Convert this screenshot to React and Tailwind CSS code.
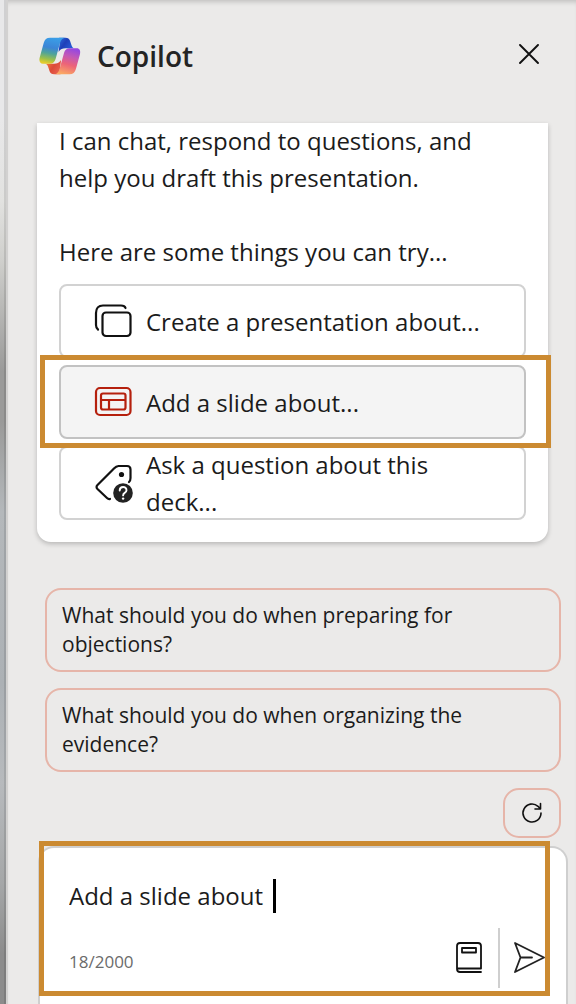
import { useState } from "react";

const MAX_CHARS = 2000;

const SUGGESTIONS = [
  "What should you do when preparing for objections?",
  "What should you do when organizing the evidence?",
];

const CopilotLogo = () => (
  <svg viewBox="0 0 42 38" className="w-[42px] h-[38px]" aria-hidden="true">
    <defs>
      <linearGradient id="leftRibbon" x1="0.6" y1="0" x2="0.4" y2="1">
        <stop offset="0" stopColor="#3a9fe8" />
        <stop offset="0.4" stopColor="#3c85d6" />
        <stop offset="0.62" stopColor="#4fa39a" />
        <stop offset="0.85" stopColor="#9cc04a" />
        <stop offset="1" stopColor="#e3cb2c" />
      </linearGradient>
      <linearGradient id="topFold" x1="0" y1="0" x2="1" y2="0.6">
        <stop offset="0" stopColor="#2a6fe0" />
        <stop offset="0.45" stopColor="#1f3fb8" />
        <stop offset="1" stopColor="#2a62de" />
      </linearGradient>
      <linearGradient id="rightRibbon" x1="0.65" y1="0" x2="0.35" y2="1">
        <stop offset="0" stopColor="#9648e0" />
        <stop offset="0.3" stopColor="#c459b4" />
        <stop offset="0.6" stopColor="#ec6378" />
        <stop offset="1" stopColor="#fbab62" />
      </linearGradient>
      <linearGradient id="bottomFold" x1="0" y1="0" x2="1" y2="0.6">
        <stop offset="0" stopColor="#f78c3c" />
        <stop offset="0.6" stopColor="#dc4a38" />
        <stop offset="1" stopColor="#e8604e" />
      </linearGradient>
    </defs>
    <path d="M20 .7h6.500c2.500 0 3.800 1 4.500 3l1.500 4.500c.6 2 1.600 3.100 3.500 3.100H26.500c-3 0-5 .7-7 3.700L21 4z" fill="url(#topFold)" />
    <path d="M21.600 37.300h-6.500c-2.500 0-3.800-1-4.500-3l-1.500-4.500c-.6-2-1.600-3.100-3.500-3.100h9.500c3 0 5-.7 7-3.700L20.600 34z" fill="url(#bottomFold)" />
    <path d="M11 .7h16c-3.500 0-5 2.300-6 5.300L16.600 22c-1 3.200-2.700 4.700-5.500 4.700H4C.8 26.700-.2 24 .7 20.500L4.700 6C5.700 2.500 7.500.7 11 .7z" fill="url(#leftRibbon)" />
    <path d="M30.600 37.300h-16c3.500 0 5-2.300 6-5.300L25 16c1-3.200 2.700-4.700 5.500-4.700h7.100c3.200 0 4.200 2.700 3.300 6.200L36.900 32c-1 3.500-2.800 5.300-6.300 5.300z" fill="url(#rightRibbon)" />
  </svg>
);

const SlidesIcon = () => (
  <svg viewBox="0 0 40 40" className="size-10" fill="none" stroke="#111" strokeWidth="2.200" strokeLinecap="round" aria-hidden="true">
    <path d="M4 28.500C2.600 27.500 2 26 2 24V12c0-4.500 2.500-7.500 7-7.500h18c2.500 0 4 .8 4.500 2.500" />
    <rect x="8.500" y="11.500" width="28" height="23.500" rx="3.500" />
  </svg>
);

const LayoutIcon = () => (
  <svg viewBox="0 0 40 40" className="size-10" fill="none" stroke="#b5200d" strokeWidth="2.200" aria-hidden="true">
    <rect x="2" y="6" width="34.500" height="27" rx="4" />
    <rect x="7" y="11.500" width="24.500" height="16" rx="2" />
    <path d="M7 18h24.500M15 18v9.500" />
  </svg>
);

const TagQuestionIcon = () => (
  <svg viewBox="0 0 40 40" className="size-10" fill="none" aria-hidden="true">
    <path d="M16 36c-1 .4-2 0-3-1L3.500 26c-1.300-1.300-1.300-2.700 0-4L19 6.500C20.500 5 22 3 24.500 3H33c2.500 0 3.500 1 3.500 3.500V15c0 2-.3 3-1.500 4" stroke="#111" strokeWidth="2.200" strokeLinecap="round" />
    <circle cx="27.500" cy="11.500" r="2.600" fill="#111" />
    <circle cx="29" cy="30" r="9.800" fill="#222" />
    <path d="M25.700 27.500c0-4.600 6.800-4.500 6.800-.3 0 2.600-3.400 2.700-3.400 5.200" stroke="#fff" strokeWidth="1.900" strokeLinecap="round" />
    <circle cx="29.100" cy="35.600" r="1.200" fill="#fff" />
  </svg>
);

const CloseIcon = () => (
  <svg viewBox="0 0 20 20" className="size-5" stroke="#111" strokeWidth="1.900" strokeLinecap="round" aria-hidden="true">
    <path d="M1 1l18 18M19 1L1 19" />
  </svg>
);

const RefreshIcon = () => (
  <svg viewBox="0 0 22 22" className="size-[22px]" fill="none" stroke="#111" strokeWidth="1.600" strokeLinecap="round" strokeLinejoin="round" aria-hidden="true">
    <path d="M20 11a9 9 0 1 1-3-6.700L19.500 7M19.500 1.500V7H14" />
  </svg>
);

const BookIcon = () => (
  <svg viewBox="0 0 26 32" className="w-[26px] h-8" fill="none" stroke="#111" strokeWidth="1.800" strokeLinecap="round" strokeLinejoin="round" aria-hidden="true">
    <path d="M25 30H4c-2 0-3-1-3-3V4c0-2 1-3 3-3h18c2 0 3 1 3 3v22.500H1.500" />
    <rect x="6" y="6" width="14" height="4.500" />
  </svg>
);

const SendIcon = () => (
  <svg viewBox="0 0 32 32" className="size-8" fill="none" stroke="#222" strokeWidth="1.800" strokeLinecap="round" strokeLinejoin="round" aria-hidden="true">
    <path d="M2 1l29 14.500L2 30l5.500-14.500zM7.500 15.500H19" />
  </svg>
);

const Highlight = ({ className }) => (
  <div className={`absolute border-[5px] border-[#cb8a31] pointer-events-none ${className}`} />
);

const PromptButton = ({ icon, label, active }) => (
  <button
    className={`
      flex items-center gap-3 w-full h-[74px] pl-[33px] pr-6
      border-2 rounded-lg text-left text-2xl leading-[37px]
      ${active ? "bg-[#f4f4f4] border-[#c2c2c2]" : "bg-white border-[#d2d2d2]"}
    `}
  >
    <span className="shrink-0">{icon}</span>
    <span>{label}</span>
  </button>
);

export default function App() {
  const [prompt, setPrompt] = useState("Add a slide about ");

  return (
    <div className="flex min-h-screen bg-[#ebeae9] text-[#1b1b1b] font-['Open_Sans','Noto_Sans',sans-serif]">
      <div className="w-2 shrink-0 border-r-2 border-[#d2d1d0] bg-[linear-gradient(#e8e8e9_12%,#e2e2e0_20%,#cfcfcc_26%,#9a9a99_37%,#9a9a99_42%,#b4b8bb_51%,#acb1b5_68%,#b7babd_78%,#a5a7a8_88%,#8c8c8c_95%)]">
        <div className="ml-1 h-full w-[2px] bg-black/10" />
      </div>

      <div className="flex flex-col flex-1 min-w-0 shadow-[inset_0_5px_5px_-3px_rgba(0,0,0,0.18)]">
        <header className="flex items-center justify-between pt-8 pl-[31px] pr-[33px]">
          <div className="flex items-center gap-4">
            <CopilotLogo />
            <h1 className="text-[28px] leading-[48px] font-semibold text-[#242424]">Copilot</h1>
          </div>
          <button aria-label="Close" className="p-1 pb-2">
            <CloseIcon />
          </button>
        </header>

        <section className="mt-[43px] ml-[29px] mr-7 px-[22px] pb-[22px] bg-white rounded-b-[14px] shadow-[0_2px_5px_rgba(0,0,0,0.22)]">
          <div className="-mt-px text-2xl leading-[37px]">
            <p>I can chat, respond to questions, and help you draft this presentation.</p>
            <p className="mt-[37px]">Here are some things you can try...</p>
          </div>
          <div className="flex flex-col gap-[7px] mt-[14px]">
            <PromptButton icon={<SlidesIcon />} label="Create a presentation about..." />
            <div className="relative z-10">
              <PromptButton icon={<LayoutIcon />} label="Add a slide about..." active />
              <Highlight className="-left-[19px] -right-[25px] -top-[10px] -bottom-[9px]" />
            </div>
            <PromptButton icon={<TagQuestionIcon />} label="Ask a question about this deck..." />
          </div>
        </section>

        <div className="flex flex-col items-end gap-4 mt-[46px] pl-[37px] pr-[15px]">
          {SUGGESTIONS.map((text) => (
            <button
              key={text}
              className="w-full h-[84px] px-[15px] border-2 border-[#e6b5a9] rounded-2xl text-left text-[21px] leading-[29px]"
            >
              {text}
            </button>
          ))}
          <button
            aria-label="Refresh suggestions"
            className="flex items-center justify-center w-[58px] h-[50px] border-2 border-[#e6b5a9] rounded-2xl"
          >
            <RefreshIcon />
          </button>
        </div>

        <div className="relative flex flex-col flex-1 mt-2 ml-[30px] mr-2 px-[29px] bg-white border-2 border-b-0 border-[#cfcfcf] rounded-t-2xl">
          <div className="flex items-center mt-[29px]">
            <input
              aria-label="Message Copilot"
              value={prompt}
              maxLength={MAX_CHARS}
              onChange={(e) => setPrompt(e.target.value)}
              className="field-sizing-content max-w-full text-2xl leading-[37px] outline-none"
            />
            <span className="w-[3px] h-[34px] ml-1 bg-black" />
          </div>
          <div className="flex items-center justify-between mt-[14px] -mr-2">
            <span className="pt-2 text-[17px] leading-7 text-[#6b6b6b]">
              {prompt.length}/{MAX_CHARS}
            </span>
            <div className="flex items-center">
              <button aria-label="Prompt guide">
                <BookIcon />
              </button>
              <div className="w-[2px] h-[60px] ml-4 mr-[13px] bg-[#cfcfcf]" />
              <button aria-label="Send">
                <SendIcon />
              </button>
            </div>
          </div>
          <Highlight className="-left-[1px] right-4 -top-[7px] h-[155px]" />
        </div>
      </div>
    </div>
  );
}
